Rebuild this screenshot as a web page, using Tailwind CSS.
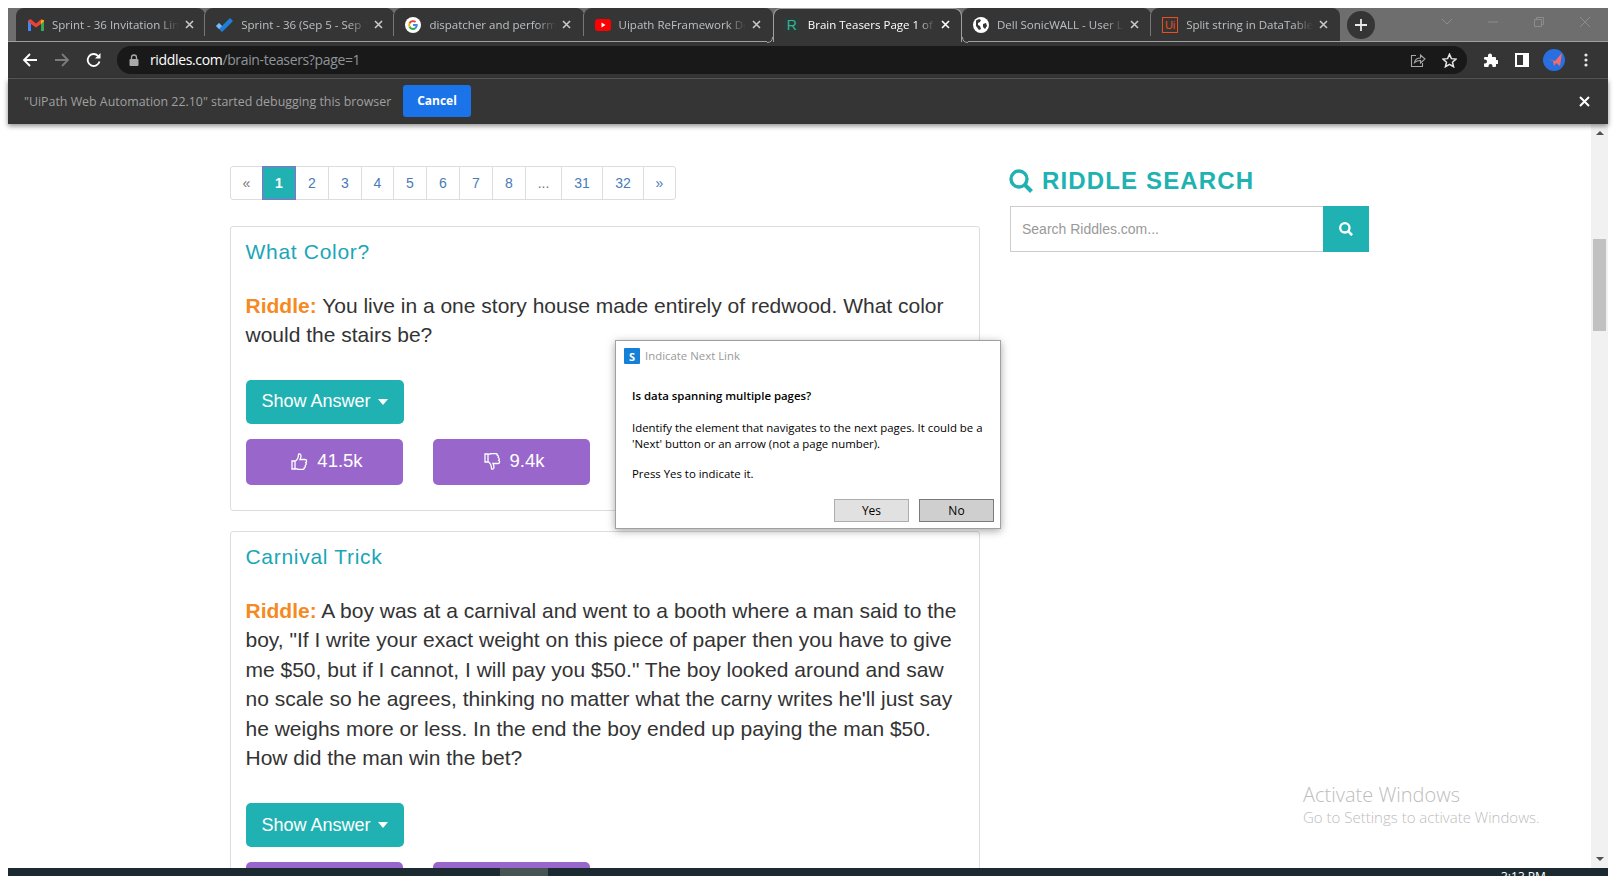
<!DOCTYPE html>
<html lang="en">
<head>
    <meta charset="UTF-8">
    <title>Brain Teasers Page 1 of 32</title>
    <script src="https://cdn.jsdelivr.net/npm/@tailwindcss/browser@4"></script>
</head>
<body class="bg-white overflow-hidden font-['Liberation_Sans',sans-serif]">
<div class="h-[876px] w-[1616px] pt-2 px-2 flex flex-col overflow-hidden">

    <!-- tab strip -->
    <div class="h-[34px] shrink-0 bg-[#6e6e6e] flex pl-2 border-b border-[#a0a0a0] font-['Open_Sans',sans-serif] text-[11.500px] text-[#bcc0c4]">
        <div class="w-[189.200px] h-[33px] bg-[#353535] rounded-t-[8px] flex items-center pl-3">
            <svg class="w-[16px] h-[12px] shrink-0" viewBox="0 0 16 12"><path d="M0 12V1.500L2.500 0 8 4.500 13.500 0 16 1.500V12h-3V5L8 8.500 3 5v7z" fill="#ea4335"/><path d="M0 12V2l3 3v7z" fill="#4285f4"/><path d="M16 12V2l-3 3v7z" fill="#34a853"/><path d="M13 5V1.500L16 1v1z" fill="#fbbc04"/></svg>
            <span class="ml-2 w-[127px] whitespace-nowrap overflow-hidden [mask-image:linear-gradient(to_right,black_85%,transparent)]">Sprint - 36 Invitation Link</span>
            <svg class="w-[9px] h-[9px] ml-[6px] shrink-0" viewBox="0 0 9 9"><path d="M1 1l7 7M8 1L1 8" stroke="#c8c8c8" stroke-width="1.600"/></svg>
            <span class="ml-auto w-px h-[22px] bg-[#777]"></span>
        </div>
        <div class="w-[189.200px] h-[33px] bg-[#353535] rounded-t-[8px] flex items-center pl-[11px]">
            <svg class="w-[17px] h-[14px] shrink-0" viewBox="0 0 17 14"><path d="M0 8l3-3 3 3 8-8 3 3-11 11z" fill="#1f7fd6"/><path d="M3 5l3 3-3 3-3-3z" fill="#7ab8ee"/></svg>
            <span class="ml-2 w-[127px] whitespace-nowrap overflow-hidden [mask-image:linear-gradient(to_right,black_85%,transparent)]">Sprint - 36 (Sep 5 - Sep 16)</span>
            <svg class="w-[9px] h-[9px] ml-[6px] shrink-0" viewBox="0 0 9 9"><path d="M1 1l7 7M8 1L1 8" stroke="#c8c8c8" stroke-width="1.600"/></svg>
            <span class="ml-auto w-px h-[22px] bg-[#777]"></span>
        </div>
        <div class="w-[189.200px] h-[33px] bg-[#353535] rounded-t-[8px] flex items-center pl-[11px]">
            <svg class="w-[16px] h-[16px] shrink-0" viewBox="0 0 16 16"><circle cx="8" cy="8" r="8" fill="#fff"/><path d="M12.700 8.100c0-.4 0-.7-.1-1H8v1.900h2.600a2.300 2.300 0 0 1-1 1.500l1.600 1.200c.9-.9 1.500-2.100 1.500-3.600z" fill="#4285f4"/><path d="M8 13c1.300 0 2.400-.4 3.200-1.200L9.600 10.600c-.4.300-1 .5-1.600.5-1.300 0-2.300-.8-2.700-2L3.700 10.300C4.500 11.900 6.100 13 8 13z" fill="#34a853"/><path d="M5.300 9.100a3 3 0 0 1 0-2L3.700 5.800a5 5 0 0 0 0 4.500z" fill="#fbbc04"/><path d="M8 5c.7 0 1.300.2 1.800.7l1.400-1.400A5 5 0 0 0 3.700 5.800l1.600 1.300C5.700 5.800 6.700 5 8 5z" fill="#ea4335"/></svg>
            <span class="ml-2 w-[127px] whitespace-nowrap overflow-hidden [mask-image:linear-gradient(to_right,black_85%,transparent)]">dispatcher and performer</span>
            <svg class="w-[9px] h-[9px] ml-[6px] shrink-0" viewBox="0 0 9 9"><path d="M1 1l7 7M8 1L1 8" stroke="#c8c8c8" stroke-width="1.600"/></svg>
            <span class="ml-auto w-px h-[22px] bg-[#777]"></span>
        </div>
        <div class="w-[189.200px] h-[33px] bg-[#353535] rounded-t-[8px] flex items-center pl-[11px]">
            <svg class="w-[16px] h-[12px] shrink-0" viewBox="0 0 16 12"><rect width="16" height="12" rx="3" fill="#f00"/><path d="M6.500 3.500v5l4-2.500z" fill="#fff"/></svg>
            <span class="ml-2 w-[127px] whitespace-nowrap overflow-hidden [mask-image:linear-gradient(to_right,black_85%,transparent)]">Uipath ReFramework Demo</span>
            <svg class="w-[9px] h-[9px] ml-[6px] shrink-0" viewBox="0 0 9 9"><path d="M1 1l7 7M8 1L1 8" stroke="#c8c8c8" stroke-width="1.600"/></svg>
        </div>
        <div class="w-[189.200px] h-[34px] pb-[2px] bg-[#353535] rounded-t-[8px] border-t border-x border-[#a0a0a0] flex items-center pl-[10px] text-white relative z-10">
            <svg class="absolute -left-[7px] -bottom-px w-[6px] h-[6px]" viewBox="0 0 6 6"><rect width="6" height="6" fill="#353535"/><path d="M0 5.500Q5.500 5.500 5.500 0" fill="none" stroke="#a0a0a0"/></svg>
            <svg class="absolute -right-[7px] -bottom-px w-[6px] h-[6px]" viewBox="0 0 6 6"><rect width="6" height="6" fill="#353535"/><path d="M6 5.500Q.5 5.500 .5 0" fill="none" stroke="#a0a0a0"/></svg>
            <span class="w-[16px] h-[16px] shrink-0 bg-[#2f3a38] text-[#2fb596] text-[14px] leading-[16px] text-center font-['Liberation_Sans',sans-serif]">R</span>
            <span class="ml-2 w-[127px] whitespace-nowrap overflow-hidden [mask-image:linear-gradient(to_right,black_85%,transparent)]">Brain Teasers Page 1 of 32</span>
            <svg class="w-[9px] h-[9px] ml-[6px] shrink-0" viewBox="0 0 9 9"><path d="M1 1l7 7M8 1L1 8" stroke="#fff" stroke-width="1.600"/></svg>
        </div>
        <div class="w-[189.200px] h-[33px] bg-[#353535] rounded-t-[8px] flex items-center pl-[11px]">
            <svg class="w-[16px] h-[16px] shrink-0" viewBox="0 0 16 16"><circle cx="8" cy="8" r="8" fill="#fff"/><path d="M3 3.500l3-1.500 2 1-1 2-2 1v2l2 1 1 3-2 1-3-4zM10 7l3-1 1 3-2 3-2-2z" fill="#353535"/></svg>
            <span class="ml-2 w-[127px] whitespace-nowrap overflow-hidden [mask-image:linear-gradient(to_right,black_85%,transparent)]">Dell SonicWALL - User Login</span>
            <svg class="w-[9px] h-[9px] ml-[6px] shrink-0" viewBox="0 0 9 9"><path d="M1 1l7 7M8 1L1 8" stroke="#c8c8c8" stroke-width="1.600"/></svg>
            <span class="ml-auto w-px h-[22px] bg-[#777]"></span>
        </div>
        <div class="w-[189.200px] h-[33px] bg-[#353535] rounded-t-[8px] flex items-center pl-[11px]">
            <span class="w-[16px] h-[16px] shrink-0 border border-[#e8501f] text-[#e8501f] text-[11px] leading-[14px] text-center font-['Liberation_Sans',sans-serif]">Ui</span>
            <span class="ml-2 w-[127px] whitespace-nowrap overflow-hidden [mask-image:linear-gradient(to_right,black_85%,transparent)]">Split string in DataTable</span>
            <svg class="w-[9px] h-[9px] ml-[6px] shrink-0" viewBox="0 0 9 9"><path d="M1 1l7 7M8 1L1 8" stroke="#c8c8c8" stroke-width="1.600"/></svg>
        </div>
        <div class="w-[28px] h-[28px] rounded-full bg-[#353535] ml-[7px] mt-[3px] flex items-center justify-center shrink-0">
            <svg class="w-[14px] h-[14px]" viewBox="0 0 14 14"><path d="M7 1v12M1 7h12" stroke="#e8e8e8" stroke-width="1.800"/></svg>
        </div>
        <div class="flex items-start ml-auto">
            <svg class="w-[46px] h-[30px]" viewBox="0 0 46 30"><path d="M18 11l5 5 5-5" fill="none" stroke="#8c8c8c"/></svg>
            <svg class="w-[46px] h-[30px]" viewBox="0 0 46 30"><path d="M18 14h10" stroke="#8c8c8c"/></svg>
            <svg class="w-[46px] h-[30px]" viewBox="0 0 46 30"><path d="M18.500 11.500h7v7h-7zM20.500 11.500v-2h7v7h-2" fill="none" stroke="#8c8c8c"/></svg>
            <svg class="w-[46px] h-[30px]" viewBox="0 0 46 30"><path d="M18 9l10 10M28 9L18 19" stroke="#8c8c8c"/></svg>
        </div>
    </div>

    <!-- toolbar -->
    <div class="h-[37px] shrink-0 bg-[#353535] border-b border-[#5c5c5c] flex items-center">
        <svg class="w-4 h-4 ml-[14px] shrink-0" viewBox="0 0 16 16"><path d="M15 8H2M8 2L2 8l6 6" fill="none" stroke="#fff" stroke-width="1.800"/></svg>
        <svg class="w-4 h-4 ml-4 shrink-0" viewBox="0 0 16 16"><path d="M1 8h13M8 2l6 6-6 6" fill="none" stroke="#7c7c7c" stroke-width="1.800"/></svg>
        <svg class="w-4 h-4 ml-4 shrink-0" viewBox="0 0 16 16"><path d="M13.500 9.500A6 6 0 1 1 12 3.800" fill="none" stroke="#fff" stroke-width="1.800"/><path d="M14.500 1v5.500H9z" fill="#fff"/></svg>
        <div class="ml-[15px] w-[1350px] h-[28px] rounded-full bg-[#191919] flex items-center pl-[12px] shrink-0">
            <svg class="w-[10px] h-[12px] shrink-0" viewBox="0 0 10 12"><path d="M2.500 5V3.500a2.500 2.500 0 0 1 5 0V5" fill="none" stroke="#a8a8a8" stroke-width="1.300"/><rect y="5" x=".5" width="9" height="7" rx="1" fill="#a8a8a8"/></svg>
            <span class="ml-[11px] -mt-px text-[14px] font-['Open_Sans',sans-serif] tracking-[-0.350px] text-[#8f9498]"><span class="text-white">riddles.com</span>/brain-teasers?page=1</span>
            <svg class="w-4 h-4 ml-auto shrink-0" viewBox="0 0 16 16"><path d="M6 3.500H1.500v11h11V11" fill="none" stroke="#a8a8a8" stroke-width="1.100"/><path d="M4.500 10.500c.5-3 3-4.500 6-4.500V3l4.500 4-4.500 4V8.500c-2.500 0-4.500.5-6 2z" fill="none" stroke="#a8a8a8" stroke-width="1.100"/></svg>
            <svg class="w-[15px] h-[15px] ml-[16px] mr-[10px] shrink-0" viewBox="0 0 24 24"><path d="M12 2l3 7 7.500.7-5.700 5 1.700 7.300L12 18.200 5.500 22l1.700-7.300-5.700-5L9 9z" fill="none" stroke="#e6e6e6" stroke-width="2.400"/></svg>
        </div>
        <svg class="w-[15px] h-[15px] ml-[16px] shrink-0" viewBox="0 0 15 15"><path d="M5 2.500a2 2 0 0 1 4 0V4h3a1 1 0 0 1 1 1v2h1a2 2 0 0 1 0 4h-1v2a1 1 0 0 1-1 1H9.500v-1a2 2 0 0 0-4 0v1H2a1 1 0 0 1-1-1V10.500h1a2 2 0 0 0 0-4H1V5a1 1 0 0 1 1-1h3z" fill="#fff"/></svg>
        <svg class="w-[14px] h-[14px] ml-[17px] shrink-0" viewBox="0 0 14 14"><path fill-rule="evenodd" d="M0 0h14v14H0zM2 2v10h6V2z" fill="#fff"/></svg>
        <span class="w-[22px] h-[22px] rounded-full bg-[#2a6fe0] ml-[14px] shrink-0 flex items-center justify-center">
            <svg class="w-[15px] h-[14px]" viewBox="0 0 15 14"><path d="M15 0L8 8 0 6l6 2 1 5 2-3 4 3z" fill="#f36c6c"/></svg>
        </span>
        <svg class="w-1 h-[14px] ml-[19px] shrink-0" viewBox="0 0 4 14"><circle cx="2" cy="2" r="1.600" fill="#e8e8e8"/><circle cx="2" cy="7" r="1.600" fill="#e8e8e8"/><circle cx="2" cy="12" r="1.600" fill="#e8e8e8"/></svg>
    </div>

    <!-- debugging infobar -->
    <div class="h-[45px] shrink-0 bg-[#353535] flex items-center pl-4 pr-[18px] shadow-[0_2px_5px_rgba(0,0,0,0.45)] relative z-10">
        <span class="text-[12.400px] font-['Open_Sans',sans-serif] text-[#a0a0a0] w-[379px] whitespace-nowrap pt-px">"UiPath Web Automation 22.10" started debugging this browser</span>
        <button class="w-[68px] h-8 -mt-[2px] pt-px bg-[#1a73e8] rounded-[3px] text-white text-[12px] font-bold font-['Open_Sans',sans-serif]">Cancel</button>
        <svg class="w-[11px] h-[11px] ml-auto" viewBox="0 0 11 11"><path d="M1 1l9 9M10 1l-9 9" stroke="#fff" stroke-width="2"/></svg>
    </div>

    <!-- page -->
    <div class="flex-1 min-h-0 flex overflow-hidden relative">
        <div class="w-[1583px] flex pl-[222px] pt-[42px] text-[#333]">
            <div class="w-[750px] shrink-0">
                <nav class="flex h-[34px] w-fit border border-[#ddd] rounded-[3px] text-[14px] text-[#4a7ab8]">
                    <a class="w-[31px] flex items-center justify-center text-[#777]">«</a>
                    <a class="w-[34px] -my-px flex items-center justify-center bg-[#20b2b2] border border-[#9966cc] text-white font-bold">1</a>
                    <a class="w-[33px] flex items-center justify-center border-r border-[#ddd]">2</a>
                    <a class="w-[33px] flex items-center justify-center border-r border-[#ddd]">3</a>
                    <a class="w-[32px] flex items-center justify-center border-r border-[#ddd]">4</a>
                    <a class="w-[33px] flex items-center justify-center border-r border-[#ddd]">5</a>
                    <a class="w-[33px] flex items-center justify-center border-r border-[#ddd]">6</a>
                    <a class="w-[33px] flex items-center justify-center border-r border-[#ddd]">7</a>
                    <a class="w-[33px] flex items-center justify-center border-r border-[#ddd]">8</a>
                    <a class="w-[36px] flex items-center justify-center border-r border-[#ddd] text-[#777]">...</a>
                    <a class="w-[41px] flex items-center justify-center border-r border-[#ddd]">31</a>
                    <a class="w-[41px] flex items-center justify-center border-r border-[#ddd]">32</a>
                    <a class="w-[31px] flex items-center justify-center">»</a>
                </nav>

                <article class="mt-[26px] h-[285px] border border-[#ddd] rounded-[3px] pl-[14.500px] pr-[15px] pt-[10px]">
                    <h3 class="text-[21px] leading-[30px] text-[#1aa6b7] tracking-[0.700px]">What Color?</h3>
                    <p class="mt-[24px] text-[21px] leading-[29.400px]"><b class="text-[#f58a22]">Riddle:</b> You live in a one story house made entirely of redwood. What color would the stairs be?</p>
                    <button class="mt-[30px] w-[158px] h-[44px] rounded-[5px] bg-[#20b2b2] text-white text-[18px] flex items-center justify-center gap-[7px]">Show Answer <span class="border-x-[5.500px] border-x-transparent border-t-[6px] border-t-white"></span></button>
                    <div class="flex gap-[30px] mt-[15px]">
                        <button class="w-[157px] h-[46px] rounded-[5px] pb-px bg-[#9966cc] text-white text-[18.500px] flex items-center justify-center gap-[9px] pl-[6px]">
                            <svg class="w-[17px] h-[17px]" viewBox="0 0 17 17"><path d="M1 8h3v8H1zM4 8.500c2-1.500 3.500-4 3.500-7 0-1 2.500-1 2.500 1.500 0 1.500-.5 2.500-1 3.500h5c2 0 2 2.500.7 3 1 1 .5 2.500-.5 3 .5 1-.2 2.200-1 2.300.2 1-.5 1.700-1.500 1.700H8c-2 0-2.500-.8-4-1" fill="none" stroke="#fff" stroke-width="1.300"/></svg>
                            41.5k
                        </button>
                        <button class="w-[157px] h-[46px] rounded-[5px] pb-px bg-[#9966cc] text-white text-[18.500px] flex items-center justify-center gap-[9px] pl-[6px]">
                            <svg class="w-[17px] h-[17px] rotate-180 -scale-x-100" viewBox="0 0 17 17"><path d="M1 8h3v8H1zM4 8.500c2-1.500 3.500-4 3.500-7 0-1 2.500-1 2.500 1.500 0 1.500-.5 2.500-1 3.500h5c2 0 2 2.500.7 3 1 1 .5 2.500-.5 3 .5 1-.2 2.200-1 2.300.2 1-.5 1.700-1.500 1.700H8c-2 0-2.500-.8-4-1" fill="none" stroke="#fff" stroke-width="1.300"/></svg>
                            9.4k
                        </button>
                    </div>
                </article>

                <article class="mt-[20px] h-[400px] border border-[#ddd] rounded-[3px] pl-[14.500px] pr-[15px] pt-[10px]">
                    <h3 class="text-[21px] leading-[30px] text-[#1aa6b7] tracking-[0.700px]">Carnival Trick</h3>
                    <p class="mt-[24px] text-[21px] leading-[29.400px]"><b class="text-[#f58a22]">Riddle:</b> A boy was at a carnival and went to a booth where a man said to the boy, "If I write your exact weight on this piece of paper then you have to give me $50, but if I cannot, I will pay you $50." The boy looked around and saw no scale so he agrees, thinking no matter what the carny writes he'll just say he weighs more or less. In the end the boy ended up paying the man $50. How did the man win the bet?</p>
                    <button class="mt-[31px] w-[158px] h-[44px] rounded-[5px] bg-[#20b2b2] text-white text-[18px] flex items-center justify-center gap-[7px]">Show Answer <span class="border-x-[5.500px] border-x-transparent border-t-[6px] border-t-white"></span></button>
                    <div class="flex gap-[30px] mt-[15px]">
                        <div class="w-[157px] h-[46px] rounded-[5px] bg-[#9966cc]"></div>
                        <div class="w-[157px] h-[46px] rounded-[5px] bg-[#9966cc]"></div>
                    </div>
                </article>
            </div>

            <aside class="ml-[30px] w-[359px] shrink-0">
                <h2 class="h-[46px] mb-[2px] flex items-center gap-[9px] text-[24px] font-bold tracking-[1.150px] text-[#20b2b2] -mt-2">
                    <svg class="w-[24px] h-[24px] -ml-px" viewBox="0 0 24 24"><circle cx="10" cy="10" r="8" fill="none" stroke="#20b2b2" stroke-width="3.400"/><path d="M16 16l6.500 6.500" stroke="#20b2b2" stroke-width="4"/></svg>
                    RIDDLE SEARCH
                </h2>
                <div class="flex h-[46px]">
                    <div class="flex-1 border border-[#ccc] border-r-0 pl-[11px] flex items-center text-[14px] text-[#999]">Search Riddles.com...</div>
                    <div class="w-[46px] bg-[#20b2b2] flex items-center justify-center">
                        <svg class="w-[14px] h-[14px]" viewBox="0 0 24 24"><circle cx="10" cy="10" r="8" fill="none" stroke="#fff" stroke-width="4"/><path d="M16 16l6.500 6.500" stroke="#fff" stroke-width="4.500"/></svg>
                    </div>
                </div>
            </aside>
        </div>

        <!-- scrollbar -->
        <div class="w-[17px] shrink-0 bg-[#f1f1f1] flex flex-col items-center justify-between pb-[7px] pt-[7px]">
            <span class="border-x-[4px] border-x-transparent border-b-[4px] border-b-[#505050]"></span>
            <span class="border-x-[4px] border-x-transparent border-t-[4px] border-t-[#505050]"></span>
        </div>
        <div class="absolute right-[2px] top-[115px] w-[13px] h-[92px] bg-[#c1c1c1]"></div>

        <!-- Activate Windows watermark -->
        <div class="absolute left-[1295px] top-[657px] font-['Open_Sans',sans-serif] text-[#bdbdbd] pointer-events-none">
            <p class="text-[20px] leading-[27px] font-light">Activate Windows</p>
            <p class="text-[15px] leading-[19px] font-light">Go to Settings to activate Windows.</p>
        </div>

        <!-- Indicate Next Link dialog -->
        <div class="absolute left-[607px] top-[216px] w-[386px] h-[189px] bg-white border border-[#a0a0a0] shadow-[0_2px_8px_rgba(0,0,0,0.35)] font-['Open_Sans',sans-serif] text-[11.400px] text-black">
            <div class="flex items-center h-[16px] mt-[7px] ml-2">
                <span class="w-4 h-4 bg-[#1580d8] rounded-[1px] flex items-center justify-center text-white text-[11px] font-bold leading-none">S</span>
                <span class="ml-[5px] text-[11.400px] text-[#9a9a9a]">Indicate Next Link</span>
            </div>
            <p class="mt-[23px] ml-4 font-semibold">Is data spanning multiple pages?</p>
            <p class="mt-[16px] ml-4 w-[365px] leading-[16px]">Identify the element that navigates to the next pages. It could be a 'Next' button or an arrow (not a page number).</p>
            <p class="mt-[13px] ml-4">Press Yes to indicate it.</p>
            <div class="flex justify-end gap-[10px] mt-[17px] mr-[6px]">
                <button class="w-[75px] h-[23px] bg-[#e1e1e1] border border-[#adadad] text-[12px] leading-none">Yes</button>
                <button class="w-[75px] h-[23px] bg-[#cfcfcf] border border-[#7a7a7a] text-[12px] leading-none">No</button>
            </div>
        </div>
    </div>

    <!-- taskbar sliver -->
    <div class="h-2 shrink-0 bg-[#1b2a30] relative overflow-hidden">
        <div class="absolute left-[492px] top-0 w-[48px] h-2 bg-[#465454]"></div>
        <span class="absolute left-[1493px] top-[1px] text-[12px] leading-[16px] text-white font-['Open_Sans',sans-serif]">3:13 PM</span>
    </div>
</div>
</body>
</html>
